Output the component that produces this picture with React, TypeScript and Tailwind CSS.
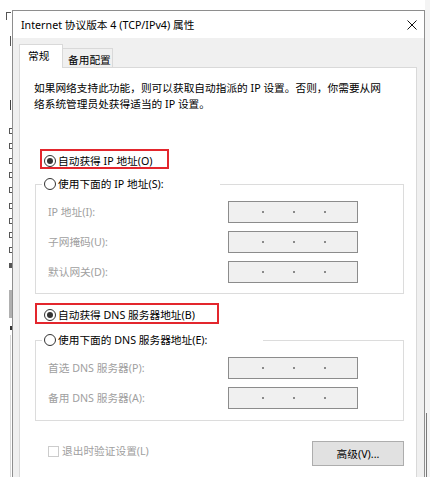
import React from "react";

const FONT = { fontFamily: '"Noto Sans", "Noto Sans CJK SC", sans-serif' };

function Radio({ checked = false }: { checked?: boolean }) {
  return (
    <span className="flex h-[12px] w-[12px] shrink-0 items-center justify-center rounded-full border border-[#333333] bg-white">
      {checked && <span className="h-[6px] w-[6px] rounded-full bg-[#333333]" />}
    </span>
  );
}

function IpBox() {
  return (
    <div className="flex h-[22px] w-[130px] items-center gap-[29px] border border-[#8c8c8c] bg-[#f0f0f0] pl-[33px]">
      <span className="h-[2px] w-[2px] bg-[#8a8a8a]" />
      <span className="h-[2px] w-[2px] bg-[#8a8a8a]" />
      <span className="h-[2px] w-[2px] bg-[#8a8a8a]" />
    </div>
  );
}

function FieldRow({ label }: { label: string }) {
  return (
    <div className="flex items-center">
      <span className="ml-[12px] w-[180px] whitespace-nowrap text-[#a0a0a0]">{label}</span>
      <IpBox />
    </div>
  );
}

function GroupBox({
  legend,
  legendWidth,
  labels,
  className,
}: {
  legend: string;
  legendWidth: string;
  labels: string[];
  className: string;
}) {
  return (
    <fieldset className={`ml-[15px] w-[369px] border border-[#dcdcdc] pt-[9px] ${className}`}>
      <legend className={`ml-[6px] flex h-[16px] items-center bg-white pl-[2px] ${legendWidth}`}>
        <Radio />
        <span className="ml-[2px] whitespace-nowrap">{legend}</span>
      </legend>
      <div className="flex flex-col gap-[8px]">
        {labels.map((l) => (
          <FieldRow key={l} label={l} />
        ))}
      </div>
    </fieldset>
  );
}

// background window peeking out on the left
function LeftStrip() {
  const marks = [128, 143, 158, 172, 187, 203, 218, 232, 247];
  return (
    <div className="relative h-full w-[12px] shrink-0 overflow-hidden bg-white">
      <span className="absolute left-[6px] top-[12px] h-[8px] w-[5px] border-l border-t border-[#555]" />
      <span className="absolute left-[10px] top-[36px] h-[10px] w-[1px] bg-[#555]" />
      <span className="absolute left-[6px] top-[100px] h-[10px] w-[5px] border-r border-[#444]" />
      {marks.map((y) => (
        <span
          key={y}
          className="absolute left-[9px] h-[6px] w-[4px] border border-[#555]"
          style={{ top: y }}
        />
      ))}
      <span className="absolute left-[9px] top-[263px] h-[5px] w-[3px] bg-[#555]" />
      <span className="absolute left-[9px] top-[290px] h-[28px] w-[3px] bg-[#b0b0b0]" />
      <span className="absolute left-[10px] top-[326px] h-[4px] w-[2px] bg-[#333]" />
      <span className="absolute left-[10px] top-[335px] h-[142px] w-[1px] bg-[#d8d8d8]" />
    </div>
  );
}

export default function App() {
  return (
    <div className="flex h-[477px] w-[430px] overflow-hidden bg-white text-[10.7px] leading-[16px] text-black" style={FONT}>
      <LeftStrip />
      <div className="mt-[10px] flex w-[413px] shrink-0 flex-col border-l border-r border-t border-[#8e8e8e] bg-[#f0f0f0]">
        {/* title bar */}
        <div className="flex h-[27px] items-center justify-between bg-white pl-[8px] pr-[7px]">
          <span className="whitespace-nowrap">Internet 协议版本 4 (TCP/IPv4) 属性</span>
          <svg width="10" height="10" viewBox="0 0 10 10" className="mt-[1px]">
            <path d="M0.5 0.5 L9.5 9.5 M9.5 0.5 L0.5 9.5" stroke="#111" strokeWidth="1" />
          </svg>
        </div>

        {/* tabs */}
        <div className="relative z-10 -mb-px ml-[6px] mt-[6px] flex items-end">
          <div className="flex h-[24px] w-[44px] items-start border-l border-r border-t border-[#d9d9d9] bg-white pl-[8px] pt-[3px]">
            常规
          </div>
          <div className="flex h-[20px] w-[50px] items-center border-r border-t border-b border-[#d9d9d9] pl-[5px] pt-[3px]">
            备用配置
          </div>
        </div>

        {/* tab page */}
        <div className="ml-[6px] flex w-[398px] flex-1 flex-col border-l border-r border-t border-[#d9d9d9] bg-white">
          <p className="ml-[14px] mt-[12px] whitespace-nowrap">
            如果网络支持此功能，则可以获取自动指派的 IP 设置。否则，你需要从网
            <br />
            络系统管理员处获得适当的 IP 设置。
          </p>

          <div className="ml-[20px] mt-[37px] flex h-[20px] w-[129px] items-center border-2 border-[#e3262d] pt-[3px]">
            <span className="ml-[2px]">
              <Radio checked />
            </span>
            <span className="ml-[2px] whitespace-nowrap">自动获得 IP 地址(O)</span>
          </div>

          <GroupBox
            className="mt-[7px] pb-[10px]"
            legend="使用下面的 IP 地址(S):"
            legendWidth="w-[178px]"
            labels={["IP 地址(I):", "子网掩码(U):", "默认网关(D):"]}
          />

          <div className="ml-[15px] mt-[9px] flex h-[21px] w-[184px] items-center border-2 border-[#e3262d] pt-[3px]">
            <span className="ml-[7px]">
              <Radio checked />
            </span>
            <span className="ml-[2px] whitespace-nowrap">自动获得 DNS 服务器地址(B)</span>
          </div>

          <GroupBox
            className="mt-[8px] pb-[11px]"
            legend="使用下面的 DNS 服务器地址(E):"
            legendWidth="w-[221px]"
            labels={["首选 DNS 服务器(P):", "备用 DNS 服务器(A):"]}
          />

          <div className="ml-[15px] mt-[20px] flex w-[369px] items-start justify-between">
            <div className="flex items-center pl-[13px] pt-[2px]">
              <span className="h-[11px] w-[11px] border border-[#cccccc] bg-white" />
              <span className="ml-[3px] whitespace-nowrap text-[#a0a0a0]">退出时验证设置(L)</span>
            </div>
            <div className="flex h-[25px] w-[92px] items-center justify-center border border-[#adadad] bg-[#e1e1e1]">
              高级(V)...
            </div>
          </div>
        </div>
      </div>
      <div className="h-full flex-1 bg-[#f4f4f4]">
        <div className="ml-[1px] mt-[413px] h-[64px] w-[1px] bg-[#7a7a7a]" />
      </div>
    </div>
  );
}
